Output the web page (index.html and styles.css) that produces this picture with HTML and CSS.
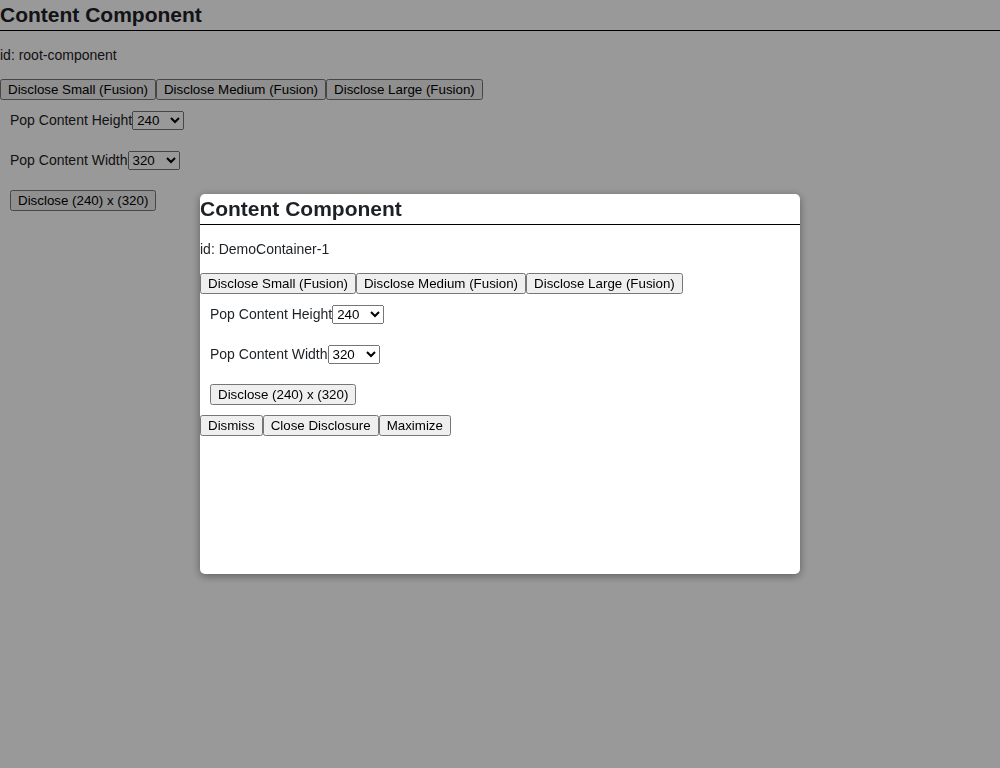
FILE: index.html
```html
<!DOCTYPE html>
<html lang="en">
<head>
<meta charset="utf-8">
<title>Content Component</title>
<link rel="stylesheet" href="styles.css">
</head>
<body>
<main class="content">
  <h1 class="title">Content Component</h1>
  <p class="ident">id: root-component</p>
  <div class="actions">
    <button type="button" class="btn">Disclose Small (Fusion)</button>
    <button type="button" class="btn">Disclose Medium (Fusion)</button>
    <button type="button" class="btn">Disclose Large (Fusion)</button>
  </div>
  <div class="field">
    <label for="root-height">Pop Content Height</label><select id="root-height" class="select"><option>240</option><option>480</option><option>1080</option></select>
  </div>
  <div class="field">
    <label for="root-width">Pop Content Width</label><select id="root-width" class="select"><option>320</option><option>640</option><option>1280</option></select>
  </div>
  <div class="field">
    <button type="button" class="btn">Disclose (240) x (320)</button>
  </div>
</main>
<div class="overlay">
  <section class="content dialog" role="dialog" aria-modal="true" aria-labelledby="dialog-title">
    <h1 class="title" id="dialog-title">Content Component</h1>
    <p class="ident">id: DemoContainer-1</p>
    <div class="actions">
      <button type="button" class="btn">Disclose Small (Fusion)</button>
      <button type="button" class="btn">Disclose Medium (Fusion)</button>
      <button type="button" class="btn">Disclose Large (Fusion)</button>
    </div>
    <div class="field">
      <label for="dialog-height">Pop Content Height</label><select id="dialog-height" class="select"><option>240</option><option>480</option><option>1080</option></select>
    </div>
    <div class="field">
      <label for="dialog-width">Pop Content Width</label><select id="dialog-width" class="select"><option>320</option><option>640</option><option>1280</option></select>
    </div>
    <div class="field">
      <button type="button" class="btn">Disclose (240) x (320)</button>
    </div>
    <div class="actions">
      <button type="button" class="btn">Dismiss</button>
      <button type="button" class="btn">Close Disclosure</button>
      <button type="button" class="btn">Maximize</button>
    </div>
  </section>
</div>
</body>
</html>
```
FILE: styles.css
```css
body {
  margin: 0;
  background: #fff;
  color: #1d2125;
  font-family: "Liberation Sans", Arial, sans-serif;
  font-size: 14px;
  line-height: 20px;
}

.title {
  margin: 0;
  border-bottom: 1px solid #000;
  font-size: 21px;
  line-height: 30px;
}

.ident {
  margin: 14px 0;
}

.actions {
  display: flex;
}

.field {
  margin: 10px;
}

.field + .field {
  margin-top: 20px;
}

.btn {
  height: 21px;
}

.btn,
.select {
  font-family: "Liberation Sans", Arial, sans-serif;
}

.overlay {
  position: fixed;
  inset: 0;
  display: flex;
  align-items: center;
  justify-content: center;
  background: rgba(0, 0, 0, 0.4);
}

.dialog {
  width: 60%;
  min-height: 380px;
  overflow: hidden;
  border-radius: 5px;
  background: #fff;
  box-shadow: 0 2px 8px rgba(0, 0, 0, 0.4);
}
```
